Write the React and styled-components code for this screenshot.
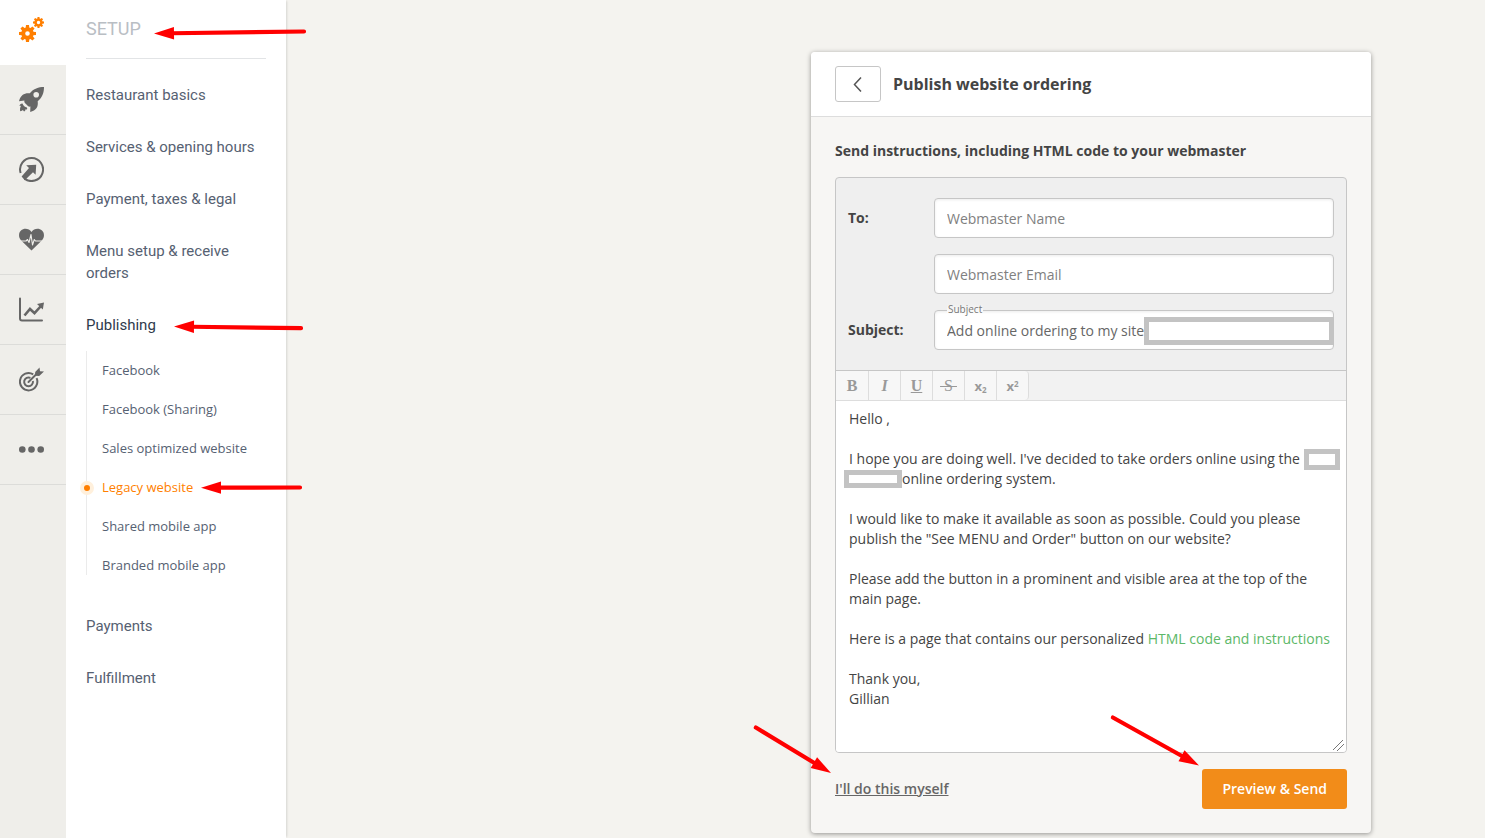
import React, { useState } from "react";
import styled, { createGlobalStyle, css } from "styled-components";

const GlobalStyle = createGlobalStyle`
  *, *::before, *::after {
    box-sizing: border-box;
  }

  body {
    margin: 0;
    background-color: #f4f3ef;
    color: #444444;
    font-family: "Open Sans", "Liberation Sans", sans-serif;
    font-size: 14px;
    line-height: 20px;
  }
`;

// page
const StPage = styled.div`
  display: flex;
  min-height: 100vh;
`;

// icon rail
const StRail = styled.nav`
  flex: none;
  width: 66px;
  background-color: #efeeea;
`;

const StRailBtn = styled.button`
  display: flex;
  align-items: center;
  width: 100%;
  height: 70px;
  padding: 0 0 0 19px;
  border: 0;
  border-bottom: 1px solid #dcdcd9;
  background-color: transparent;
  color: #666666;
  cursor: pointer;

  ${({ $active }) =>
    $active &&
    css`
      height: 65px;
      padding-bottom: 6px;
      border-bottom: 0;
      background-color: #ffffff;
      color: #ff7f00;
    `}
`;

// side menu
const StMenu = styled.aside`
  flex: none;
  width: 220px;
  padding: 0 20px;
  background-color: #ffffff;
  box-shadow: 2px 0 2px -1px rgba(0, 0, 0, 0.12);
`;

const StMenuTitle = styled.h1`
  position: relative;
  margin: 0 0 10px;
  height: 59px;
  border-bottom: 1px solid #e2e4e6;
  color: #b9bec4;
  font-family: Roboto, sans-serif;
  font-size: 18px;
  font-weight: 400;
  line-height: 58px;
`;

const StMenuList = styled.ul`
  margin: 0;
  padding: 0;
  list-style: none;
`;

const StMenuItem = styled.li`
  position: relative;
`;

const StMenuLink = styled.a`
  display: block;
  padding: 15px 0;
  color: ${({ $active }) => ($active ? "#2f3a4c" : "#566172")};
  font-family: Roboto, sans-serif;
  font-size: 15px;
  line-height: 22px;
  text-decoration: none;
`;

const StSubList = styled.ul`
  display: flex;
  flex-direction: column;
  gap: 20px;
  margin: 0 0 25px;
  padding: 10px 0 0 15px;
  border-left: 1px solid #ebebeb;
  list-style: none;
`;

const StSubItem = styled.li`
  position: relative;
  font-size: 13px;
  line-height: 19px;
`;

const StSubLink = styled.a`
  color: ${({ $active }) => ($active ? "#ff7f00" : "#566172")};
  text-decoration: none;
`;

const StDot = styled.span`
  position: absolute;
  top: 3px;
  left: -22px;
  width: 14px;
  height: 14px;
  border: 4px solid #fff0dc;
  border-radius: 50%;
  background-color: #ff7f00;
`;

// publish card
const StMain = styled.main`
  flex: 1;
  display: flex;
  justify-content: flex-end;
  align-items: flex-start;
  padding: 52px 114px 5px 24px;
`;

const StCard = styled.section`
  width: 100%;
  max-width: 560px;
  border-radius: 4px;
  background-color: #f7f6f4;
  box-shadow: 0 1px 5px rgba(0, 0, 0, 0.4);
`;

const StCardHeader = styled.header`
  display: flex;
  align-items: center;
  gap: 12px;
  height: 65px;
  padding: 0 24px;
  border-bottom: 1px solid #dddddd;
  border-radius: 4px 4px 0 0;
  background-color: #ffffff;
`;

const StBackBtn = styled.button`
  display: flex;
  align-items: center;
  justify-content: center;
  width: 46px;
  height: 36px;
  padding: 0;
  border: 1px solid #c6c6c6;
  border-radius: 3px;
  background-color: #ffffff;
  color: #555555;
  cursor: pointer;
`;

const StCardTitle = styled.h2`
  margin: 0;
  font-size: 16px;
  font-weight: 700;
  line-height: 24px;
`;

const StCardBody = styled.form`
  padding: 24px;
`;

const StHeading = styled.h3`
  margin: 0 0 16px;
  font-size: 14px;
  font-weight: 700;
`;

const StMailBox = styled.div`
  border: 1px solid #c6c6c6;
  border-radius: 4px;
  background-color: #efefef;
`;

const StFields = styled.div`
  display: grid;
  grid-template-columns: 86px 1fr;
  row-gap: 16px;
  align-items: center;
  padding: 20px 12px;
`;

const StLabel = styled.label`
  font-weight: 700;
`;

const StField = styled.div`
  position: relative;
  grid-column: 2;
`;

const StInput = styled.input`
  display: block;
  width: 100%;
  height: 40px;
  padding: 0 12px;
  border: 1px solid #c6c6c6;
  border-radius: 4px;
  background-color: #ffffff;
  box-shadow: inset 0 1px 3px rgba(0, 0, 0, 0.08);
  color: #666666;
  font-family: inherit;
  font-size: 14px;
  outline: none;

  &::placeholder {
    color: #808080;
    opacity: 1;
  }
`;

const StFloatLabel = styled.span`
  position: absolute;
  top: -6px;
  left: 13px;
  padding: 0 1px;
  background: linear-gradient(#efefef, #ffffff);
  color: #777777;
  font-size: 10px;
  line-height: 11px;
`;

// blank frames that cover private names
const StMask = styled.span`
  display: inline-block;
  width: ${({ $width }) => $width}px;
  height: ${({ $height }) => $height}px;
  border: 5px solid #c3c3c3;
  background-color: #ffffff;
  vertical-align: middle;
`;

const StFieldMask = styled(StMask)`
  position: absolute;
  top: 7px;
  right: 0;
`;

const StTextMask = styled(StMask)`
  margin: -4px ${({ $end }) => ($end ? "-10px" : "0")} -2px
    ${({ $end }) => ($end ? "0" : "-5px")};
`;

const StToolbar = styled.div`
  display: flex;
  height: 31px;
  border-top: 1px solid #c6c6c6;
  border-bottom: 1px solid #dddddd;
  background-color: #f2f2f2;
`;

const StTool = styled.button`
  width: ${({ $first }) => ($first ? 33 : 32)}px;
  padding: 0;
  border: 0;
  border-right: 1px solid #dddddd;
  background-color: #f7f7f7;
  color: #999999;
  font-family: ${({ $sans }) =>
    $sans ? '"Open Sans", sans-serif' : '"Liberation Serif", serif'};
  font-size: ${({ $sans }) => ($sans ? 13 : 16)}px;
  font-weight: ${({ $light }) => ($light ? 400 : 700)};
  font-style: ${({ $italic }) => ($italic ? "italic" : "normal")};
  text-decoration: ${({ $line }) => $line || "none"};
  line-height: 20px;
  cursor: pointer;

  &:last-child {
    border-radius: 0 4px 4px 0;
  }

  sub,
  sup {
    font-size: 8px;
    line-height: 0;
  }

  sub {
    vertical-align: -2px;
  }

  sup {
    vertical-align: 4px;
  }
`;

const StEditor = styled.div`
  height: 351px;
  padding: 8px 13px;
  border-radius: 0 0 3px 3px;
  background-color: #ffffff;
  overflow: hidden;
  resize: vertical;
  outline: none;

  &::-webkit-resizer {
    background: linear-gradient(
        135deg,
        transparent 45%,
        #777777 45% 49%,
        transparent 49% 68%,
        #777777 68% 72%,
        transparent 72%
      )
      2px 3px / 11px 11px no-repeat;
  }

  p {
    margin: 0 0 20px;
  }

  a {
    color: #5cb868;
    text-decoration: none;
  }
`;

const StFooter = styled.footer`
  position: relative;
  display: flex;
  align-items: center;
  justify-content: space-between;
  margin-top: 16px;
`;

const StSelfLink = styled.a`
  color: #666666;
  font-weight: 600;
`;

const StSendBtn = styled.button`
  height: 40px;
  padding: 0 20px 2px;
  border: 0;
  border-radius: 3px;
  background-color: #f28c19;
  color: #ffffff;
  font-family: inherit;
  font-size: 14px;
  font-weight: 600;
  cursor: pointer;
`;

// red pointer arrows
const StArrow = styled.svg`
  position: absolute;
  z-index: 2;
  top: ${({ $top }) => $top}px;
  left: ${({ $left }) => $left}px;
  overflow: visible;
  pointer-events: none;
`;

const StFooterArrow = styled(StArrow)`
  left: ${({ $right, $left }) => ($right ? "auto" : `${$left}px`)};
  right: ${({ $right }) => ($right ? `${$right}px` : "auto")};
`;

// the tip is at (x2, y2), the tail at (x1, y1)
const arrowShape = (x1, y1, x2, y2) => {
  const angle = (Math.atan2(y2 - y1, x2 - x1) * 180) / Math.PI;
  const length = Math.hypot(x2 - x1, y2 - y1);
  return (
    <g transform={`translate(${x2} ${y2}) rotate(${angle})`} fill="#ff0000">
      <path d="M0 0L-20 -6.200V6.200Z" />
      <path
        d={`M${1 - length} 0H-18`}
        stroke="#ff0000"
        strokeWidth="4.200"
        strokeLinecap="round"
      />
    </g>
  );
};

// one gear: ring body with eight teeth
const Gear = ({ cx, cy, r, hole }) => (
  <g transform={`translate(${cx} ${cy})`}>
    {[0, 45, 90, 135, 180, 225, 270, 315].map((deg) => (
      <path
        key={deg}
        transform={`rotate(${deg})`}
        d={`M${-r * 0.22} ${-r * 0.6}L${-r * 0.18} ${-r}H${r * 0.18}L${r * 0.22} ${-r * 0.6}Z`}
        fill="currentColor"
      />
    ))}
    <circle
      r={(r * 0.73 + hole) / 2}
      fill="none"
      stroke="currentColor"
      strokeWidth={r * 0.73 - hole}
    />
  </g>
);

const icons = {
  Setup: (
    <>
      <Gear cx={8.5} cy={16.5} r={8.5} hole={2.3} />
      <Gear cx={19.5} cy={5.5} r={5.5} hole={1.7} />
    </>
  ),
  Launch: (
    <>
      <path
        fillRule="evenodd"
        fill="currentColor"
        d="M25 0C19.500 0 14.500 1.600 10.800 6.300C8.600 6 5.500 6.200 3.500 8C1.500 9.800 .400 12.200 0 14.300L5.400 13.600C5.200 14.500 5.300 15.200 5.700 15.800L9.200 19.300C9.800 19.700 10.600 19.800 11.400 19.600L11.200 25C14 24.300 16.300 23 17.600 21C18.900 19 19 16.500 18.700 14.200C23.400 10.500 25 5.500 25 0ZM17.200 5A2.800 2.800 0 1 1 17.200 10.600A2.800 2.800 0 1 1 17.200 5Z"
      />
      <path
        fill="currentColor"
        d="M3.500 16.500C1.800 16.400 .700 17.500 .500 19L2 18.700C.900 20.500 .900 22.500 1.200 24.200C2.500 24.100 3.400 23.700 4 23C4.100 23.600 4.500 24.100 5.100 24.400C6.200 23.900 6.600 23 6.500 22.200L8 22.600C8.300 21.800 8.300 21 7.900 20.500C6 20.200 4.200 18.600 3.500 16.500Z"
      />
    </>
  ),
  Promote: (
    <>
      <path
        d="M1.600 16A11.500 11.500 0 1 1 5.500 21.600"
        fill="none"
        stroke="currentColor"
        strokeWidth="2"
      />
      <path
        fill="currentColor"
        d="M7.200 8.200L17.200 7.800L16.600 17.700L14 15.200L5.800 23.200L2.600 19.500L10 11Z"
      />
    </>
  ),
  Health: (
    <>
      <path
        fill="currentColor"
        d="M12.500 23.500L2.200 13.500C-.700 10.500-.600 5.800 2 3.500C5 .800 10 1.300 12.500 5C15 1.300 20 .800 23 3.500C25.600 5.800 25.700 10.500 22.800 13.500Z"
      />
      <path
        d="M2 14H7L8.500 12.500L10 15.500L12 7.500L13.500 18L15.300 12.500L16.500 14H23"
        fill="none"
        stroke="#efeeea"
        strokeWidth="1.100"
        strokeLinejoin="round"
      />
    </>
  ),
  Reports: (
    <>
      <path
        d="M1 1.500V21.500Q1 23.500 3 23.500H23"
        fill="none"
        stroke="currentColor"
        strokeWidth="2"
        strokeLinecap="round"
      />
      <path
        d="M5.500 18.500L11 12L15.500 16.200L22 9"
        fill="none"
        stroke="currentColor"
        strokeWidth="2.600"
      />
      <path fill="currentColor" d="M25 5.500L18 7L23.800 12.600Z" />
    </>
  ),
  Goals: (
    <>
      <path
        d="M14.200 7.300A8.700 8.700 0 1 0 17.600 11.200"
        fill="none"
        stroke="currentColor"
        strokeWidth="2"
      />
      <path
        d="M11.400 10.800A4.400 4.400 0 1 0 13.900 14"
        fill="none"
        stroke="currentColor"
        strokeWidth="2"
      />
      <path
        d="M9.500 15L18.500 6"
        stroke="currentColor"
        strokeWidth="2"
        strokeLinecap="round"
      />
      <path
        fill="currentColor"
        d="M16 8.800L16.200 5L20.500 .500L21 4.200L25 4.600L20.200 9Z"
      />
    </>
  ),
  More: (
    <g fill="currentColor">
      <circle cx="3.300" cy="12.500" r="3.300" />
      <circle cx="12.500" cy="12.500" r="3.300" />
      <circle cx="21.700" cy="12.500" r="3.300" />
    </g>
  ),
};

const menu = [
  { text: "Restaurant basics" },
  { text: "Services & opening hours" },
  { text: "Payment, taxes & legal" },
  { text: "Menu setup & receive orders" },
  {
    text: "Publishing",
    sub: [
      "Facebook",
      "Facebook (Sharing)",
      "Sales optimized website",
      "Legacy website",
      "Shared mobile app",
      "Branded mobile app",
    ],
  },
  { text: "Payments" },
  { text: "Fulfillment" },
];

const SideMenu = () => (
  <StMenu>
    <StMenuTitle>
      SETUP
      <StArrow $top={31} $left={68} width="151" height="3">
        {arrowShape(151, 0.5, 0, 2.5)}
      </StArrow>
    </StMenuTitle>
    <StMenuList>
      {menu.map(({ text, sub }) => (
        <StMenuItem key={text}>
          <StMenuLink href="#" $active={!!sub}>
            {text}
          </StMenuLink>
          {sub && (
            <>
              <StArrow $top={26} $left={88} width="128" height="4">
                {arrowShape(128, 3.2, 0, 1.5)}
              </StArrow>
              <StSubList>
                {sub.map((name) => {
                  const active = name === "Legacy website";
                  return (
                    <StSubItem key={name}>
                      {active && <StDot />}
                      <StSubLink href="#" $active={active}>
                        {name}
                      </StSubLink>
                      {active && (
                        <StArrow $top={9} $left={99} width="101" height="3">
                          {arrowShape(100, 0.5, 0, 0.7)}
                        </StArrow>
                      )}
                    </StSubItem>
                  );
                })}
              </StSubList>
            </>
          )}
        </StMenuItem>
      ))}
    </StMenuList>
  </StMenu>
);

const Editor = () => (
  <StEditor
    contentEditable
    suppressContentEditableWarning
    role="textbox"
    aria-multiline="true"
    aria-label="Message"
    spellCheck={false}
  >
    <p>Hello ,</p>
    <p>
      I hope you are doing well. I've decided to take orders online using the{" "}
      <StTextMask $width={36} $height={21} $end />
      <br />
      <StTextMask $width={58} $height={18} />
      online ordering system.
    </p>
    <p>
      I would like to make it available as soon as possible. Could you please
      publish the "See MENU and Order" button on our website?
    </p>
    <p>
      Please add the button in a prominent and visible area at the top of the
      main page.
    </p>
    <p>
      Here is a page that contains our personalized{" "}
      <a href="#">HTML code and instructions</a>
    </p>
    <p>
      Thank you,
      <br />
      Gillian
    </p>
  </StEditor>
);

const App = () => {
  const [name, setName] = useState("");
  const [email, setEmail] = useState("");
  const [subject, setSubject] = useState("Add online ordering to my site");

  return (
    <StPage>
      <GlobalStyle />
      <StRail>
        {Object.entries(icons).map(([label, icon]) => (
          <StRailBtn key={label} aria-label={label} $active={label === "Setup"}>
            <svg width="25" height="25" viewBox="0 0 25 25">
              {icon}
            </svg>
          </StRailBtn>
        ))}
      </StRail>
      <SideMenu />
      <StMain>
        <StCard>
          <StCardHeader>
            <StBackBtn type="button" aria-label="Back">
              <svg width="10" height="16" viewBox="0 0 10 16" fill="none">
                <path
                  d="M8 1.500L1.500 8.500L8 15.500"
                  stroke="currentColor"
                  strokeWidth="1.500"
                />
              </svg>
            </StBackBtn>
            <StCardTitle>Publish website ordering</StCardTitle>
          </StCardHeader>
          <StCardBody onSubmit={(e) => e.preventDefault()}>
            <StHeading>
              Send instructions, including HTML code to your webmaster
            </StHeading>
            <StMailBox>
              <StFields>
                <StLabel htmlFor="name">To:</StLabel>
                <StField>
                  <StInput
                    id="name"
                    placeholder="Webmaster Name"
                    value={name}
                    onChange={(e) => setName(e.target.value)}
                  />
                </StField>
                <StField>
                  <StInput
                    type="email"
                    aria-label="Webmaster Email"
                    placeholder="Webmaster Email"
                    value={email}
                    onChange={(e) => setEmail(e.target.value)}
                  />
                </StField>
                <StLabel htmlFor="subject">Subject:</StLabel>
                <StField>
                  <StInput
                    id="subject"
                    value={subject}
                    onChange={(e) => setSubject(e.target.value)}
                  />
                  <StFloatLabel>Subject</StFloatLabel>
                  <StFieldMask $width={190} $height={28} />
                </StField>
              </StFields>
              <StToolbar>
                <StTool type="button" $first>B</StTool>
                <StTool type="button" $italic>I</StTool>
                <StTool type="button" $line="underline">U</StTool>
                <StTool type="button" $line="line-through" $light>
                  &nbsp;S&nbsp;
                </StTool>
                <StTool type="button" $sans>x<sub>2</sub></StTool>
                <StTool type="button" $sans>x<sup>2</sup></StTool>
              </StToolbar>
              <Editor />
            </StMailBox>
            <StFooter>
              <StSelfLink href="#">I'll do this myself</StSelfLink>
              <StSendBtn type="submit">Preview &amp; Send</StSendBtn>
              <StFooterArrow $top={-42} $left={-80} width="76" height="46">
                {arrowShape(0, 0, 76, 46)}
              </StFooterArrow>
              <StFooterArrow $top={-52} $right={148} width="87" height="48">
                {arrowShape(0, 0, 87, 48.5)}
              </StFooterArrow>
            </StFooter>
          </StCardBody>
        </StCard>
      </StMain>
    </StPage>
  );
};

export default App;
